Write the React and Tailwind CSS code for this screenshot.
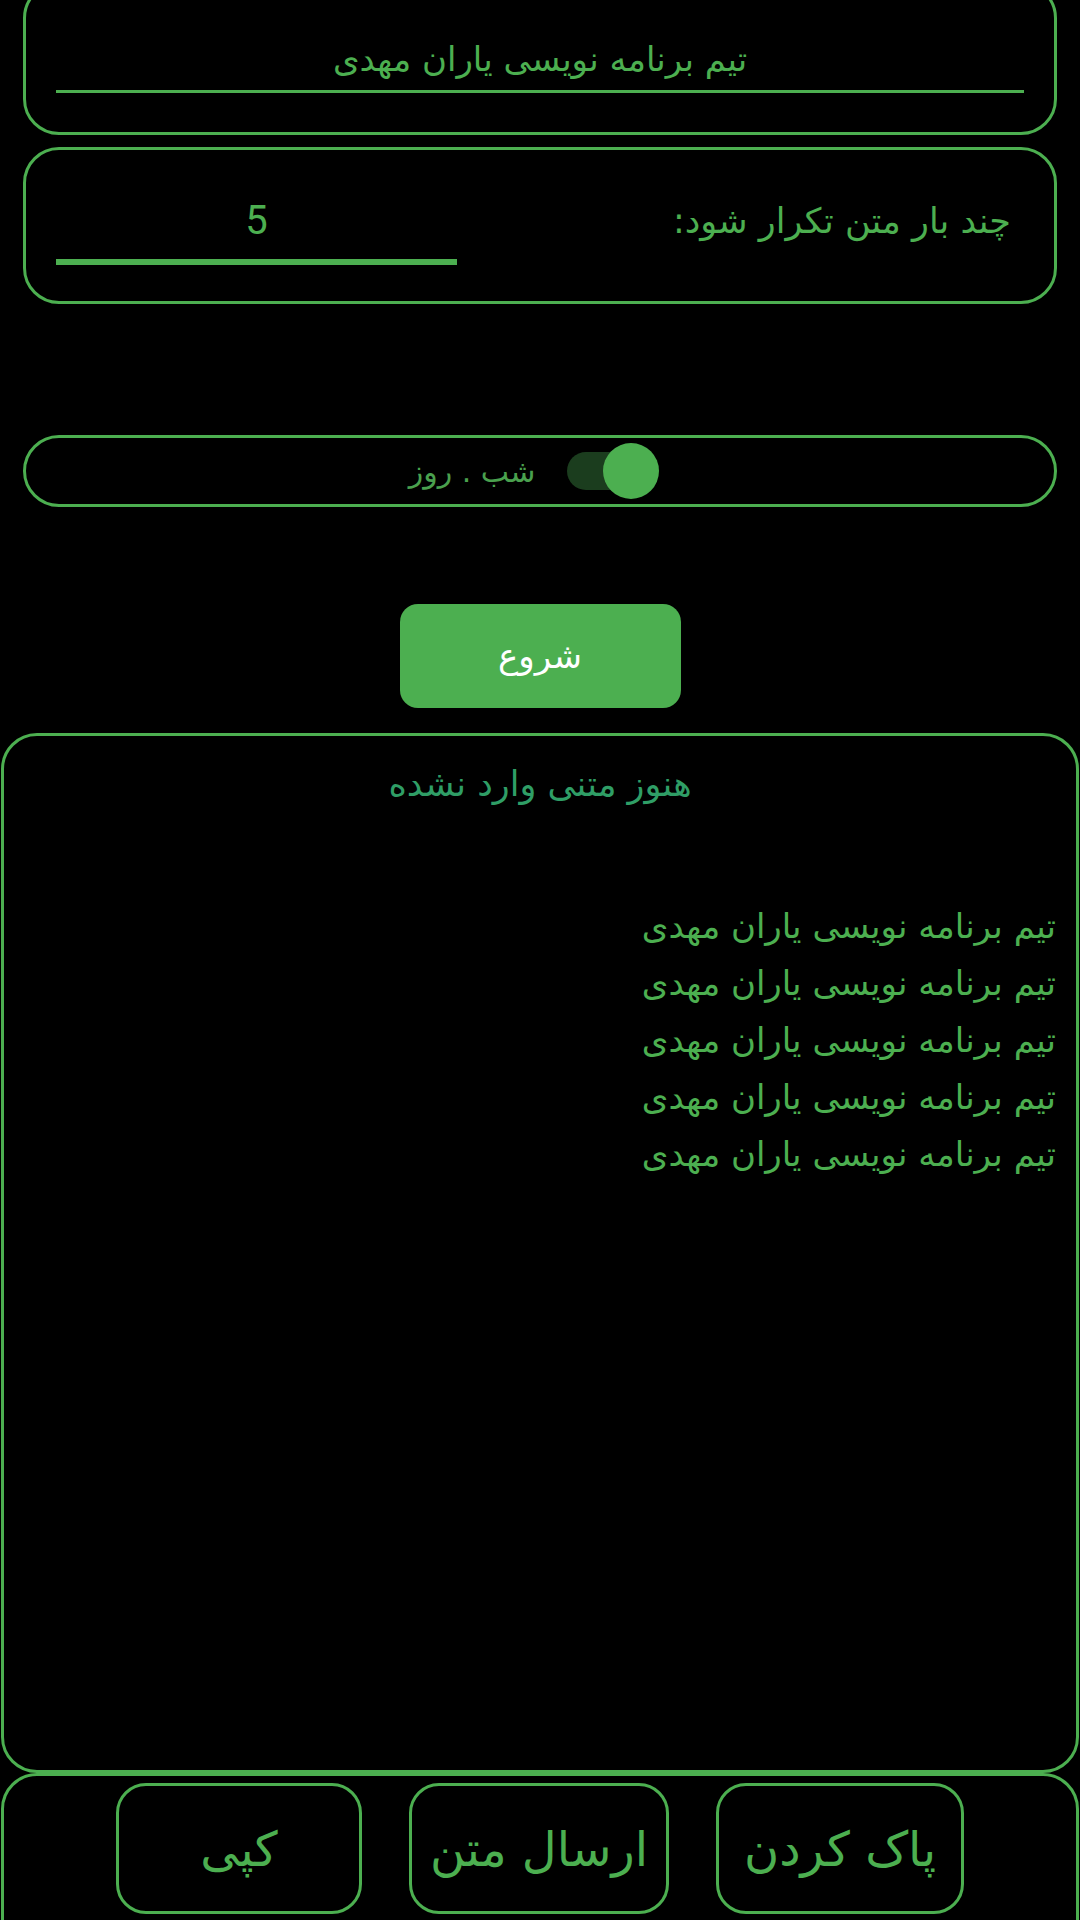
import React from "react";

const lines = Array.from({ length: 5 }, () => "تیم برنامه نویسی یاران مهدی");

function ActionButton({ label, width }) {
  return (
    <div
      className={`flex h-[131px] items-center justify-center rounded-[30px] border-[3px] border-[#4caf50] text-[48px] text-[#4caf50] ${width}`}
    >
      {label}
    </div>
  );
}

export default function App() {
  return (
    <div
      className="flex h-[1920px] w-[1080px] flex-col overflow-hidden bg-black"
      style={{ fontFamily: '"DejaVu Sans", "Noto Sans", sans-serif' }}
    >
      {/* نام تیم */}
      <div className="mx-[23px] mt-[-18px] h-[153px] shrink-0 rounded-[36px] border-[3px] border-[#4caf50] px-[30px] pt-[54px]">
        <div className="text-center text-[34px] leading-[40px] text-[#4caf50]" dir="rtl">
          تیم برنامه نویسی یاران مهدی
        </div>
        <div className="mt-[11px] h-[3px] bg-[#4caf50]" />
      </div>

      {/* تعداد تکرار */}
      <div className="mx-[23px] mt-[12px] flex h-[157px] shrink-0 items-start justify-between rounded-[36px] border-[3px] border-[#4caf50] pl-[30px] pr-[43px] pt-[51px]">
        <div className="flex w-[401px] flex-col">
          <div className="text-center text-[40px] leading-[40px] text-[#4caf50]" style={{ fontFamily: 'Roboto, "Liberation Sans", sans-serif' }}>
            5
          </div>
          <div className="mt-[18px] h-[6px] bg-[#4caf50]" />
        </div>
        <div className="text-[35px] leading-[40px] text-[#4caf50]" dir="rtl">
          چند بار متن تکرار شود:
        </div>
      </div>

      {/* شب / روز */}
      <div className="mx-[23px] mt-[131px] flex h-[72px] shrink-0 items-center justify-center gap-[32px] rounded-full border-[3px] border-[#4caf50] pr-[20px]">
        <div className="text-[30px] text-[#4aa04e]" dir="rtl">
          شب . روز
        </div>
        <div className="relative h-[38px] w-[84px] rounded-full bg-[#1b3d1e]">
          <div className="absolute right-[-8px] top-[-9px] h-[56px] w-[56px] rounded-full bg-[#4caf50]" />
        </div>
      </div>

      {/* شروع */}
      <div className="mt-[97px] flex shrink-0 justify-center">
        <div className="flex h-[104px] w-[281px] items-center justify-center rounded-[18px] bg-[#4caf50] text-[34px] text-white">
          شروع
        </div>
      </div>

      {/* خروجی */}
      <div className="mx-[1px] mt-[25px] h-[1040px] shrink-0 rounded-[36px] border-[3px] border-[#4caf50] pr-[20px] pt-[28px]">
        <div className="pl-[20px] text-center text-[35px] leading-[40px] text-[#2f9e66]" dir="rtl">
          هنوز متنی وارد نشده
        </div>
        <div className="mt-[94px] text-right text-[34px] leading-[57px] text-[#4caf50]" dir="rtl">
          {lines.map((line, i) => (
            <div key={i}>{line}</div>
          ))}
        </div>
      </div>

      {/* دکمه ها */}
      <div className="mx-[1px] flex h-[180px] shrink-0 justify-center gap-[47px] rounded-t-[36px] border-[3px] border-[#4caf50] pt-[7px]">
        <ActionButton label="کپی" width="w-[246px]" />
        <ActionButton label="ارسال متن" width="w-[260px]" />
        <ActionButton label="پاک کردن" width="w-[248px]" />
      </div>
    </div>
  );
}
